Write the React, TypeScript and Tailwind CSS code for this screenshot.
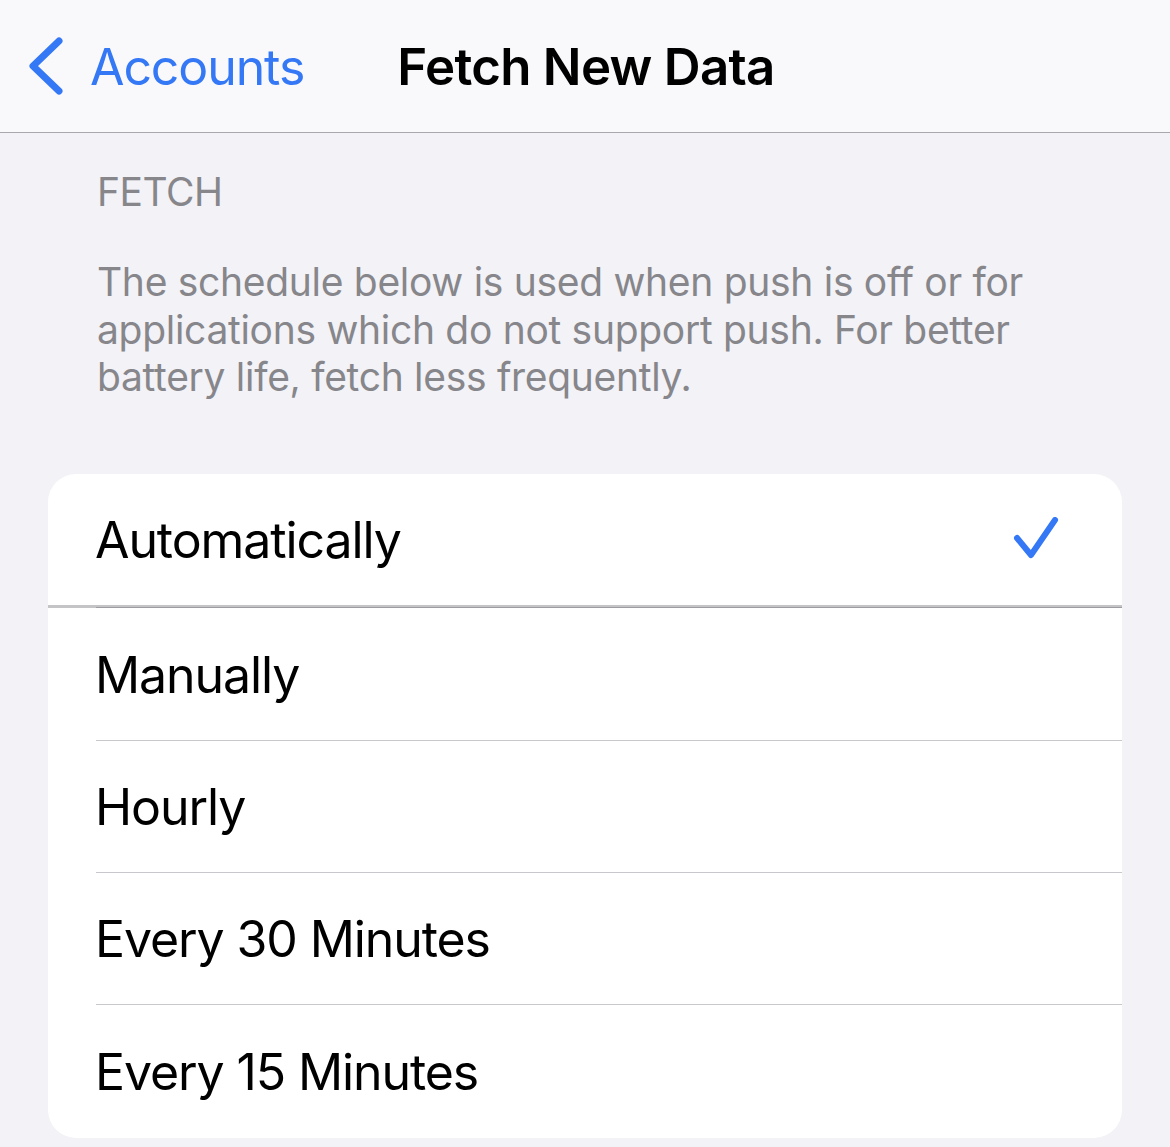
import React from "react";

const font = { fontFamily: "Inter, 'Noto Sans', sans-serif" };

function Row({ label, checked, sep, h = "h-[131px]" }: { label: string; checked?: boolean; sep: "none" | "thin" | "thick"; h?: string }) {
  return (
    <div className="relative">
      <div className={`${h} flex items-center justify-between pl-[47px] pr-[62px]`}>
        <span className="text-[50px] leading-none text-black tracking-[-1.1px] mt-[2px]">{label}</span>
        {checked && (
          <svg width="48" height="44" viewBox="0 0 48 44">
            <path d="M5 21 L19 38 L43 3" fill="none" stroke="#3478f6" strokeWidth="6" strokeLinecap="round" strokeLinejoin="round" />
          </svg>
        )}
      </div>
      {sep === "thin" && <div className="ml-[48px] h-px bg-[#c8c8cc]" />}
      {sep === "thick" && (
        <div className="h-[3px] relative">
          <div className="h-[3px] bg-[#c4c4c6]" />
          <div className="absolute left-[48px] right-0 bottom-0 h-px bg-[#9d9da1]" />
        </div>
      )}
    </div>
  );
}

export default function App() {
  return (
    <div className="w-[1170px] h-[1147px] bg-[#f2f2f7] overflow-hidden" style={font}>
      <div className="h-[132px] bg-[#f9f9fb] relative flex items-center border-b border-[#a9a9ad] box-content">
        <div className="flex items-center pl-[28px] gap-[26px]">
          <svg width="36" height="58" viewBox="0 0 36 58">
            <path d="M31 4 L5 29 L31 54" fill="none" stroke="#3478f6" strokeWidth="7" strokeLinecap="round" strokeLinejoin="round" />
          </svg>
          <span className="text-[50px] leading-none text-[#3478f6] tracking-[-1.1px] mt-[2px]">Accounts</span>
        </div>
        <div className="absolute inset-0 flex items-center justify-center pointer-events-none">
          <span className="text-[51px] leading-none font-semibold text-black tracking-[-0.7px] ml-[2px]">Fetch New Data</span>
        </div>
      </div>
      <div className="pl-[97px] pt-[35px]">
        <div className="text-[39px] leading-[48px] text-[#86868b] tracking-[-0.5px]">FETCH</div>
        <div className="mt-[42px] text-[39px] leading-[47.5px] text-[#86868b] tracking-[-0.3px] whitespace-nowrap">
          The schedule below is used when push is off or for
          <br />
          applications which do not support push. For better
          <br />
          battery life, fetch less frequently.
        </div>
      </div>
      <div className="mt-[73px] mx-[48px] bg-white rounded-[28px] overflow-hidden">
        <Row label="Automatically" checked sep="thick" />
        <Row label="Manually" sep="thin" h="h-[132px]" />
        <Row label="Hourly" sep="thin" />
        <Row label="Every 30 Minutes" sep="thin" />
        <Row label="Every 15 Minutes" sep="none" h="h-[133px]" />
      </div>
    </div>
  );
}
